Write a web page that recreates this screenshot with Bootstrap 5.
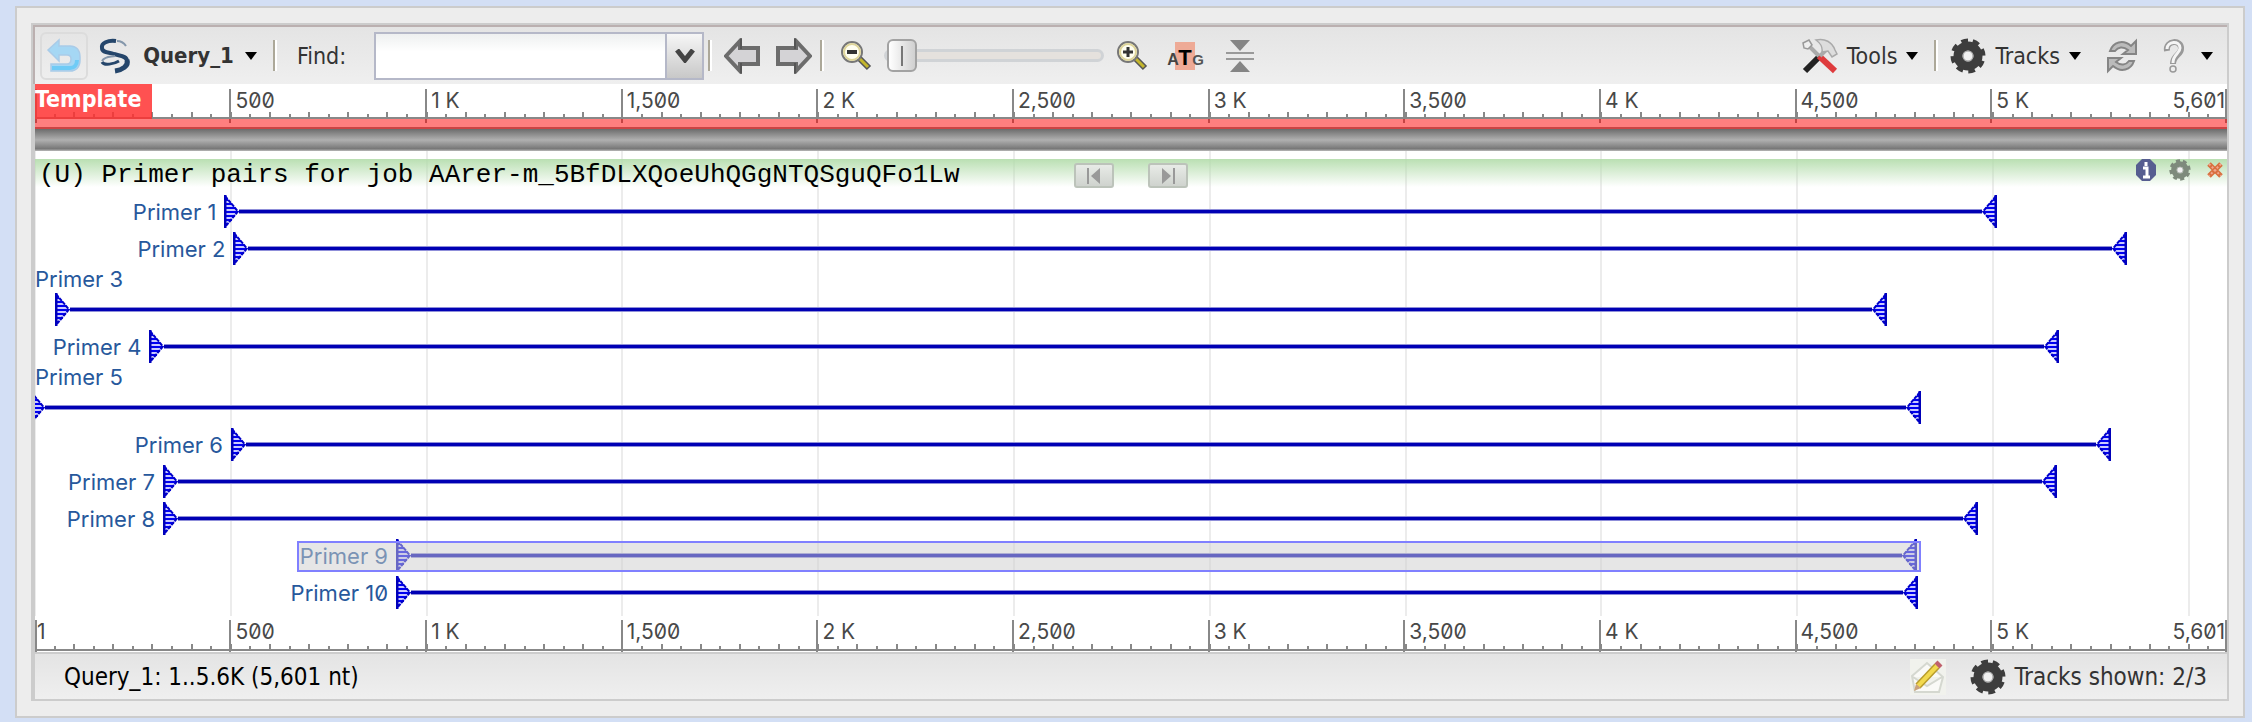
<!DOCTYPE html>
<html lang="en">
<head>
<meta charset="utf-8">
<meta name="viewport" content="width=device-width, initial-scale=1">
<title>Primer pairs viewer</title>
<link href="https://cdn.jsdelivr.net/npm/bootstrap@5.3.0/dist/css/bootstrap.min.css" rel="stylesheet">
<style>
  body { background: #d3dff5; font-family: "DejaVu Sans Condensed", "DejaVu Sans", sans-serif; font-size: 23px; line-height: 30px; color: #333; padding: 6px 7px 5px 15px; }
  .shell { background: #ededed; border: 2px solid #ccc; padding: 15px 14px; }
  .viewer { border: 2px solid #ccc; background: #fff; }
  .viewer-top { border: solid #bbb0b0; border-width: 2px 0 0 2px; }
  .viewer-body { border-left: 2px solid #ccc; }
  .bar-tool { background: linear-gradient(#e4e4e4, #efefef); height: 57px; padding: 0 14px 0 5px; white-space: nowrap; }
  .tool { background: none; border: 0; padding: 0; color: #333; display: flex; align-items: center; flex: none; }
  .tool svg, .track-tools svg { display: block; flex: none; }
  .tool-back { width: 48px; height: 48px; border: 2px solid #dcdcdc; border-radius: 6px; justify-content: center; }
  .tool-query { width: 161px; font-weight: 700; font-size: 22px; }
  .tool-menu { gap: 9px; }
  .caret { width: 0; border: 6px solid transparent; border-top: 8px solid #000; border-bottom: 0; flex: none; }
  .split { width: 4px; height: 31px; background: #aca899; border-right: 2px solid #fff; flex: none; }
  .find-label { width: 77px; }
  .find-box { width: 293px; height: 48px; border: 2px solid #b5b8c8; background: linear-gradient(#eef0f0, #fff 40%); padding: 0 8px; }
  .find-drop { width: 37px; height: 48px; justify-content: center; border: solid #b5b8c8; border-width: 2px 2px 2px 0; background: linear-gradient(#f6f6f6, #c8c8c8); }
  .zoom-range { appearance: none; -webkit-appearance: none; width: 220px; height: 34px; background: none; margin: 0; }
  .zoom-range::-webkit-slider-runnable-track { height: 13px; border: 3px solid #d0d3d6; border-radius: 7px; background: #e5e1dd; }
  .zoom-range::-webkit-slider-thumb { -webkit-appearance: none; width: 30px; height: 33px; margin-top: -13px; border: 2px solid #a2a2a2; border-radius: 6px;
    background: linear-gradient(#777, #777) center / 2px 20px no-repeat, linear-gradient(90deg, #fff, #d0d0d0); }
  .gap-pan { gap: 16px; }
  .gap-zoom { gap: 12px; }
  .gap-view { gap: 18px; margin-left: 18px; }

  .ruler { position: relative; font-family: Inter, sans-serif; font-feature-settings: "zero"; font-size: 21px; line-height: 24px; color: #484848; overflow: hidden; }
  .ruler-scale { height: 35px; border-bottom: 2px solid #888;
    background:
      repeating-linear-gradient(90deg, #888 0 2px, transparent 2px 1.7857%) -1px 100% / calc(100% + 1px) 5px no-repeat,
      repeating-linear-gradient(90deg, #888 0 2px, transparent 2px .89285%) -1px 100% / calc(100% + 1px) 3px no-repeat; }
  .seg { flex: 500 1 0; min-width: 0; border-left: 2px solid #888; text-indent: 4px; height: 34px; }
  .seg-first { flex-grow: 497; text-indent: 0; }
  .seg-last { flex-grow: 601; border-right: 2px solid #888; }
  .seg-end { text-indent: 0; }
  .ruler-top { height: 45px; }
  .ruler-top .ruler-scale { padding-top: 5px; }
  .template-tag { position: absolute; left: 0; top: 0; height: 35px; width: 117px; background: rgba(255,48,48,.84); color: #fff; font: 700 23px/30px "DejaVu Sans Condensed", "DejaVu Sans", sans-serif; }
  .template-line { position: absolute; left: 0; right: 0; top: 35px; height: 10px; background: rgba(255,0,0,.5); border-bottom: 2px solid #c44; }
  .overview { height: 22px; background: linear-gradient(#6c6c6c, #b0b0b0 50%, #777 90%, #bbb); }

  .tracks { overflow: hidden; padding: 8px 0 5px;
    background: repeating-linear-gradient(90deg, #ececec 0 2px, transparent 2px 8.9285%) -1px 0 / calc(100% + 1px) 100% no-repeat; }
  .track-head { height: 34px; padding: 0 4px; background: linear-gradient(rgba(178,220,170,.9), rgba(255,255,255,0) 28px); }
  .track-title { font: 26px/32px "Liberation Mono", monospace; color: #000; white-space: pre; margin: 0; width: 1035px; flex: none; }
  .step { width: 40px; height: 25px; margin-top: 4px; padding: 0; border: 2px solid #bcc3ba; border-radius: 3px; background: linear-gradient(#e8ebe7, #cfd3ce); display: flex; align-items: center; justify-content: center; }
  .step-next { margin-left: 34px; }
  .track-tools { gap: 12px; }
  .lane { height: 37px; display: flex; align-items: center; position: relative; }
  .name { color: #27589c; font-family: Inter, sans-serif; font-feature-settings: "zero"; font-size: 22px; line-height: 24px; height: 24px; white-space: nowrap; }
  .lane .name { text-align: right; padding-right: 8px; flex: none; }
  .pair { display: flex; align-items: center; flex: none; }
  .pair svg { width: 15px; height: 33px; flex: none; }
  .pair .line { flex: 1; height: 5px; background: #0000b4; border: solid #8f8fd9; border-width: 1px 0; }
  .picked { position: absolute; top: 4px; height: 31px; border: 2px solid #8080ff; background: rgba(205,205,205,.5); }
  .ruler-bottom { height: 36px; }
  .ruler-bottom .ruler-scale { padding-top: 4px; }
  .bar-status { height: 47px; border-top: 2px solid #ccc; background: linear-gradient(#e4e4e4, #efefef); padding: 0 20px 0 29px; font-size: 24px; white-space: nowrap; }
</style>
</head>
<body>
<svg width="0" height="0" class="position-absolute" aria-hidden="true">
  <defs>
    <symbol id="fwd" viewBox="0 0 15 33">
      <path d="M1 1L14 16.500L1 32Z" fill="#c9c9ff"/>
      <path d="M1 5h3M1 9h7M1 13h10M1 17h13M1 21h10M1 25h7M1 29h3" stroke="#0000f0" stroke-width="2"/>
      <path d="M1 0V33" stroke="#0000b8" stroke-width="3"/>
      <path d="M1 1L14 16.500L1 32" fill="none" stroke="#0000c8" stroke-width="2" stroke-dasharray="4 1"/>
    </symbol>
    <symbol id="rev" viewBox="0 0 15 33"><use href="#fwd" transform="translate(15 0) scale(-1 1)"/></symbol>
    <symbol id="gear" viewBox="0 0 36 36">
      <path d="M18 6.500a11.500 11.500 0 1 0 0 23a11.500 11.500 0 0 0 0-23z" fill="none" stroke="currentColor" stroke-width="5" stroke-dasharray="5 4.030"  transform="translate(-4.500 -4.500) scale(1.250)"/>
      <circle cx="18" cy="18" r="10" fill="none" stroke="currentColor" stroke-width="9"/>
      <circle cx="18" cy="18" r="5" fill="#f0f0f0" stroke="#999" stroke-width="1"/>
    </symbol>
    <symbol id="arrow" viewBox="0 0 36 36"><path d="M2 18L16 3v7h18v16H16v7z" fill="#d4d3d6" stroke="#6c6c6c" stroke-width="4"/><path d="M17 1v10M17 25v10" stroke="#555" stroke-width="2"/></symbol>
    <symbol id="lens" viewBox="0 0 32 32"><path d="M19 18L29 28" stroke="#555" stroke-width="6"/><path d="M19 18L28 27" stroke="#c4b62c" stroke-width="3"/><circle cx="12" cy="12" r="10" fill="#fffef0" stroke="#777" stroke-width="2"/><circle cx="12" cy="12" r="8" fill="none" stroke="#ded59a" stroke-width="2"/></symbol>
  </defs>
</svg>
<main class="shell">
  <div class="viewer">
    <div class="viewer-top">
      <div class="bar-tool d-flex align-items-center">
        <button class="tool tool-back" type="button" aria-label="Back"><svg width="36" height="36" viewBox="0 0 36 36"><path d="M2 12L13 2v6h11c6 0 10 4 10 11v3c0 7-4 11-10 11H5v-7h16c3 0 4-2 4-5s-1-4-4-4h-8v6z" fill="#a5d7f4" stroke="#a9cbe8" stroke-width="1.500"/><path d="M6 30h18c4 0 7-3 7-8" fill="none" stroke="#6fcbf6" stroke-width="4"/></svg></button>
        <button class="tool tool-query ms-2 justify-content-between" type="button"><svg width="36" height="36" viewBox="0 0 36 36" fill="none" stroke="#25466b"><path d="M20 3C12 2 5 5 6 10c0 5 7 4 12 6 6 2 13 2 13 7" stroke-width="4"/><path d="M21 3c4 0 7 2 9 5" stroke="#8497ab" stroke-width="2"/><path d="M6 23c3-5 8-4 13-5" stroke="#8497ab" stroke-width="2"/><path d="M6 24c2 4 12 2 17-1" stroke-width="3"/><path d="M31 22c2 6-5 10-12 11" stroke-width="5"/></svg><span>Query_1</span><i class="caret"></i></button>
        <span class="split ms-3 me-3"></span>
        <label class="find-label ms-1" for="find">Find:</label>
        <input class="find-box" id="find" type="text">
        <button class="tool find-drop" type="button" aria-label="Recent searches"><svg width="20" height="14" viewBox="0 0 20 14"><path d="M2 1l8 10 8-10" fill="none" stroke="#444" stroke-width="5"/></svg></button>
        <span class="split ms-1 me-2"></span>
        <div class="d-flex align-items-center gap-pan ms-1">
          <button class="tool" type="button" aria-label="Pan left"><svg width="36" height="36"><use href="#arrow"/></svg></button>
          <button class="tool" type="button" aria-label="Pan right"><svg width="36" height="36" viewBox="0 0 36 36"><use href="#arrow" transform="translate(36 0) scale(-1 1)"/></svg></button>
        </div>
        <span class="split mx-2 me-3"></span>
        <div class="d-flex align-items-center gap-zoom">
          <button class="tool" type="button" aria-label="Zoom out"><svg width="32" height="32" viewBox="0 0 32 32"><use href="#lens"/><path d="M7 12h10" stroke="#333" stroke-width="4"/></svg></button>
          <input class="zoom-range" type="range" min="0" max="100" value="0" aria-label="Zoom">
          <button class="tool" type="button" aria-label="Zoom in"><svg width="32" height="32" viewBox="0 0 32 32"><use href="#lens"/><path d="M7 12h10M12 7v10" stroke="#333" stroke-width="3"/></svg></button>
        </div>
        <div class="d-flex align-items-center gap-view">
          <button class="tool" type="button" aria-label="Zoom to sequence"><svg width="38" height="36" viewBox="0 0 38 36"><path d="M9 4h20v28H9z" fill="#eeaa96"/><g font-family="Liberation Sans, sans-serif" font-weight="700" text-anchor="middle"><text x="7" y="27" font-size="16" fill="#444">A</text><text x="32" y="27" font-size="15" fill="#555">G</text><text x="19" y="27" font-size="22" fill="#000">T</text></g></svg></button>
          <button class="tool" type="button" aria-label="Collapse"><svg width="36" height="36" viewBox="0 0 36 36"><path d="M8 2h20l-10 11zM8 34h20l-10-11z" fill="#858585"/><path d="M4 15h28M4 21h28" stroke="#999" stroke-width="2"/></svg></button>
        </div>

        <button class="tool tool-menu ms-auto" type="button"><svg width="36" height="36" viewBox="0 0 36 36"><path d="M3 33L18 18" stroke="#222" stroke-width="6"/><path d="M17 18L33 33" stroke="#de3b3d" stroke-width="6"/><path d="M4 5L17 18M18 18L28 8" stroke="#aaa" stroke-width="4"/><path d="M1 5l6-3 3 5-4 4-4-1z" fill="#eee" stroke="#999" stroke-width="1.500"/><path d="M14 2c9-2 16 2 19 10l2 4-5 3-4-6-6 1c1-6-2-9-6-12z" fill="#ddd" stroke="#aaa" stroke-width="1.500"/></svg><span>Tools</span><i class="caret"></i></button>
        <span class="split mx-3 me-2"></span>
        <button class="tool tool-menu ms-1" type="button"><svg width="36" height="36" color="#3d3d3d"><use href="#gear"/></svg><span>Tracks</span><i class="caret"></i></button>
        <button class="tool ms-4" type="button" aria-label="Refresh"><svg width="34" height="36" viewBox="0 0 34 36"><path d="M5 13C8 4 18 1 26 8l5-5v13H18l5-4c-5-4-10-3-13 1zM29 23C26 32 16 35 8 28l-5 5V20h13l-5 4c5 4 10 3 13-1z" fill="#bbb" stroke="#858585" stroke-width="2"/></svg></button>
        <button class="tool ms-4 gap-3" type="button" aria-label="Help"><svg width="22" height="36" viewBox="0 0 22 36"><g fill="none"><path d="M4 13c-2-11 15-12 14-2 0 6-8 6-8 15" stroke="#999" stroke-width="6"/><path d="M4 11c0-8 13-9 13-1 0 6-7 6-7 15" stroke="#f5f5f5" stroke-width="3"/></g><circle cx="10" cy="31" r="3" fill="#eee" stroke="#999" stroke-width="1.500"/></svg><i class="caret"></i></button>
      </div>
    </div>
    <div class="viewer-body">
      <div class="ruler ruler-top">
        <div class="ruler-scale"><div class="d-flex">
          <div class="seg seg-first"></div><div class="seg">500</div><div class="seg">1 K</div><div class="seg">1,500</div><div class="seg">2 K</div><div class="seg">2,500</div><div class="seg">3 K</div><div class="seg">3,500</div><div class="seg">4 K</div><div class="seg">4,500</div><div class="seg seg-last d-flex justify-content-between"><span>5 K</span><span class="seg-end">5,601</span></div>
        </div></div>
        <div class="template-tag">Template</div>
        <div class="template-line"></div>
      </div>
      <div class="overview"></div>
      <section class="tracks">
        <div class="track-head d-flex align-items-start">
          <h1 class="track-title">(U) Primer pairs for job AArer-m_5BfDLXQoeUhQGgNTQSguQFo1Lw</h1>
          <button class="step" type="button" aria-label="Previous"><svg width="18" height="16" viewBox="0 0 18 16"><path d="M3 0v16" stroke="#999" stroke-width="2"/><path d="M15 0v16L6 8z" fill="#999"/></svg></button>
          <button class="step step-next" type="button" aria-label="Next"><svg width="18" height="16" viewBox="0 0 18 16"><path d="M15 0v16" stroke="#999" stroke-width="2"/><path d="M3 0v16l9-8z" fill="#999"/></svg></button>
          <div class="track-tools ms-auto d-flex align-items-center">
            <button class="tool" type="button" aria-label="Track info"><svg width="22" height="22" viewBox="0 0 22 22"><path d="M7 0h8l6 6v10l-6 6H7l-6-6V6z" fill="#565d90"/><path d="M11 3v4M8 9h4v8M8 18h7" stroke="#fff" stroke-width="3" fill="none"/></svg></button>
            <button class="tool" type="button" aria-label="Track settings"><svg width="22" height="22" color="#7e8a7c"><use href="#gear"/></svg></button>
            <button class="tool ms-1" type="button" aria-label="Remove track"><svg width="16" height="16" viewBox="0 0 16 16"><path d="M2 2l12 12M14 2L2 14" stroke="#d87040" stroke-width="5"/><path d="M2 2l12 12M14 2L2 14" stroke="#f2a58e" stroke-width="2" stroke-dasharray="2 2"/></svg></button>
          </div>
        </div>
        <div class="lane"><span class="name" style="width:8.64%">Primer 1</span><div class="pair" style="width:80.87%"><svg><use href="#fwd"/></svg><span class="line"></span><svg><use href="#rev"/></svg></div></div>
        <div class="lane"><span class="name" style="width:9.05%">Primer 2</span><div class="pair" style="width:86.39%"><svg><use href="#fwd"/></svg><span class="line"></span><svg><use href="#rev"/></svg></div></div>
        <div class="name">Primer 3</div>
        <div class="lane"><div class="pair" style="margin-left:.91%;width:83.58%"><svg><use href="#fwd"/></svg><span class="line"></span><svg><use href="#rev"/></svg></div></div>
        <div class="lane"><span class="name" style="width:5.22%">Primer 4</span><div class="pair" style="width:87.11%"><svg><use href="#fwd"/></svg><span class="line"></span><svg><use href="#rev"/></svg></div></div>
        <div class="name">Primer 5</div>
        <div class="lane"><div class="pair" style="margin-left:-.23%;width:86.25%"><svg><use href="#fwd"/></svg><span class="line"></span><svg><use href="#rev"/></svg></div></div>
        <div class="lane"><span class="name" style="width:8.94%">Primer 6</span><div class="pair" style="width:85.79%"><svg><use href="#fwd"/></svg><span class="line"></span><svg><use href="#rev"/></svg></div></div>
        <div class="lane"><span class="name" style="width:5.84%">Primer 7</span><div class="pair" style="width:86.39%"><svg><use href="#fwd"/></svg><span class="line"></span><svg><use href="#rev"/></svg></div></div>
        <div class="lane"><span class="name" style="width:5.84%">Primer 8</span><div class="pair" style="width:82.78%"><svg><use href="#fwd"/></svg><span class="line"></span><svg><use href="#rev"/></svg></div></div>
        <div class="lane"><span class="name" style="width:16.47%">Primer 9</span><div class="pair" style="width:69.41%"><svg><use href="#fwd"/></svg><span class="line"></span><svg><use href="#rev"/></svg></div><div class="picked" style="left:11.95%;right:13.96%"></div></div>
        <div class="lane"><span class="name" style="width:16.47%">Primer 10</span><div class="pair" style="width:69.43%"><svg><use href="#fwd"/></svg><span class="line"></span><svg><use href="#rev"/></svg></div></div>
      </section>
      <div class="ruler ruler-bottom">
        <div class="ruler-scale"><div class="d-flex">
          <div class="seg seg-first">1</div><div class="seg">500</div><div class="seg">1 K</div><div class="seg">1,500</div><div class="seg">2 K</div><div class="seg">2,500</div><div class="seg">3 K</div><div class="seg">3,500</div><div class="seg">4 K</div><div class="seg">4,500</div><div class="seg seg-last d-flex justify-content-between"><span>5 K</span><span class="seg-end">5,601</span></div>
        </div></div>
      </div>
      <footer class="bar-status d-flex align-items-center">
        <span class="text-black">Query_1: 1..5.6K (5,601 nt)</span>
        <button class="tool ms-auto" type="button" aria-label="Edit"><svg width="36" height="36" viewBox="0 0 36 36"><path d="M0 0h36v36H0z" fill="#f1f2ed"/><path d="M2 17L17 4l16 14-4 15H5zM3 18l14 9 15-9" fill="#fafaf7" stroke="#d5d8d0" stroke-width="2"/><path d="M8 27L27 7" stroke="#b89c2c" stroke-width="7"/><path d="M8 27L27 7" stroke="#f2d94e" stroke-width="4"/><path d="M27 7l3-3" stroke="#c0606c" stroke-width="7"/><path d="M4 32l2-7 5 4z" fill="#caa27a"/></svg></button>
        <button class="tool ms-4 gap-2" type="button"><svg width="36" height="36" color="#3d3d3d"><use href="#gear"/></svg><span>Tracks shown: 2/3</span></button>
      </footer>
    </div>
  </div>
</main>
<script src="https://cdn.jsdelivr.net/npm/bootstrap@5.3.0/dist/js/bootstrap.bundle.min.js"></script>
</body>
</html>
